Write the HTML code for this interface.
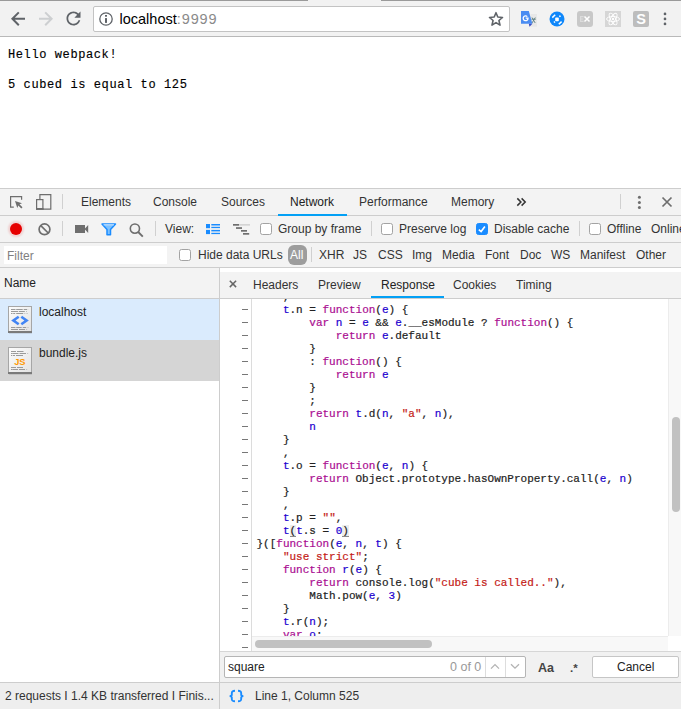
<!DOCTYPE html>
<html><head><meta charset="utf-8">
<style>
*{margin:0;padding:0;box-sizing:border-box}
html,body{width:681px;height:709px;overflow:hidden;background:#fff;font-family:"Liberation Sans",sans-serif;font-size:12px;color:#303030}
.a{position:absolute}
svg{position:absolute;overflow:visible}
.pg{position:absolute;left:8px;font-family:"Liberation Mono",monospace;font-size:12px;letter-spacing:0.6px;line-height:15px;color:#000;white-space:pre;-webkit-text-stroke:0.15px #000}
.bar{position:absolute;left:0;width:681px;background:#f3f3f3;border-bottom:1px solid #cdcdcd}
.sep{position:absolute;width:1px;background:#d0d0d0}
.cb{position:absolute;width:12px;height:12px;border:1px solid #a3a3a3;border-radius:2.5px;background:#fff}
.l{position:absolute;white-space:nowrap;color:#333;line-height:14px}
#code{position:absolute;left:220px;top:299px;width:461px;height:352px;background:#fff;overflow:hidden}
.ln{position:absolute;left:36.5px;font-family:"Liberation Mono",monospace;font-size:11px;line-height:13px;white-space:pre;color:#222;-webkit-text-stroke:0.2px currentColor}
.k{color:#aa0d91}.v{color:#1c00cf}.s{color:#c41a16}.n{color:#1c00cf}
.dash{position:absolute;left:22px;width:6px;height:1px;background:#777}
u{text-decoration:none;box-shadow:inset 0 -1px 0 #8a8a8a;background:rgba(0,0,0,.07)}
</style></head><body>
<!-- browser chrome -->
<div class="a" style="left:0;top:0;width:681px;height:37px;background:#f2f2f2;border-bottom:1px solid #b9b9b9"></div>
<div class="a" style="left:0;top:0;width:308px;height:1px;background:#9a9a9a"></div>
<div class="a" style="left:381px;top:0;width:300px;height:1px;background:#9a9a9a"></div>
<svg style="left:0;top:0" width="60" height="37" viewBox="0 0 60 37"><path d="M25 18.8H12.5M18.8 12.4L12.4 18.8L18.8 25.2" fill="none" stroke="#5f6368" stroke-width="2"/><path d="M39 18.8H51.5M45.2 12.4L51.6 18.8L45.2 25.2" fill="none" stroke="#cdcfd1" stroke-width="2"/></svg>
<svg style="left:62.9px;top:7.9px" width="21" height="21" viewBox="0 0 24 24"><path fill="#5f6368" d="M17.65 6.35C16.2 4.9 14.21 4 12 4c-4.42 0-7.99 3.58-7.99 8s3.57 8 7.99 8c3.730 0 6.84-2.55 7.73-6h-2.08c-.82 2.33-3.04 4-5.65 4-3.310 0-6-2.69-6-6s2.69-6 6-6c1.66 0 3.14.69 4.22 1.78L13 11h7V4l-2.35 2.35z"/></svg>
<div class="a" style="left:93px;top:6px;width:417px;height:26px;background:#fff;border:1px solid #c3c3c3;border-radius:2px"></div>
<svg style="left:99px;top:12px" width="14" height="14" viewBox="0 0 14 14"><circle cx="7" cy="7" r="6.2" fill="none" stroke="#5f6368" stroke-width="1.3"/><rect x="6" y="3" width="2" height="1.7" fill="#5f6368"/><rect x="6" y="6.1" width="2" height="4.8" fill="#5f6368"/></svg>
<div class="a" style="left:119.5px;top:10px;font-size:14.5px;line-height:18px;color:#000;white-space:nowrap">localhost<span style="color:#8a8a8a;letter-spacing:0.9px">:9999</span></div>
<svg style="left:0;top:0" width="681" height="37"><polygon points="496.00,12.70 497.81,17.06 502.51,17.43 498.93,20.50 500.03,25.09 496.00,22.63 491.97,25.09 493.07,20.50 489.49,17.43 494.19,17.06" fill="none" stroke="#5f6368" stroke-width="1.6" stroke-linejoin="round"/></svg>
<!-- extensions -->
<svg style="left:520px;top:11px" width="18" height="16" viewBox="0 0 18 16"><rect x="10.5" y="3" width="6.5" height="12.7" fill="#e8e8e8"/><path d="M12 6.5l3.2 5.5M15.3 6.5l-3.3 5.5M11.5 8.2h4.3" stroke="#5d7f80" stroke-width="0.9"/><path d="M1 0h7.8l3.6 12.8H1z" fill="#4a8cf2"/><path d="M8.8 12.8h3.6l-2.9 2.9z" fill="#3d4fc4"/><path d="M7.3 5.6A2.4 2.4 0 1 0 8 7.2H5.7" fill="none" stroke="#fff" stroke-width="1.3"/></svg>
<svg style="left:549px;top:11px" width="16" height="16" viewBox="0 0 16 16"><circle cx="8" cy="8" r="7.5" fill="#0f87fa"/><rect x="6.2" y="6.6" width="3.6" height="3.6" rx="0.8" fill="#fff"/><path d="M3.3 6.6L6.2 3.8M12.6 10.6L9.8 13.3" stroke="#fff" stroke-width="1.5"/><path d="M10.2 5.5l1.4-0.6M5 11.5l0.9-0.9" stroke="#fff" stroke-width="1.6"/></svg>
<svg style="left:577px;top:11px" width="16" height="16" viewBox="0 0 16 16"><rect x="0" y="0" width="16" height="16" rx="3" fill="#c8c8c8"/><path d="M6.6 5.6H3.6V10.4H6.6M3.6 8H6.2" fill="none" stroke="#dcdcdc" stroke-width="1.2"/><path d="M7.5 5.5l5 5M12.5 5.5l-5 5" stroke="#fff" stroke-width="1.5"/></svg>
<svg style="left:605px;top:11px" width="16" height="16" viewBox="0 0 16 16"><rect width="16" height="16" fill="#d6d6d6"/><g fill="none" stroke="#fff" stroke-width="0.9"><ellipse cx="8" cy="8" rx="6.5" ry="2.5"/><ellipse cx="8" cy="8" rx="6.5" ry="2.5" transform="rotate(60 8 8)"/><ellipse cx="8" cy="8" rx="6.5" ry="2.5" transform="rotate(120 8 8)"/></g><circle cx="8" cy="8" r="1.2" fill="#fff"/></svg>
<svg style="left:633px;top:11px" width="16" height="16" viewBox="0 0 16 16"><rect width="16" height="16" rx="2" fill="#bdbdbd"/><text x="8" y="13.1" font-family="Liberation Sans" font-weight="bold" font-size="14.5" fill="#fff" text-anchor="middle">S</text></svg>
<svg style="left:663px;top:12px" width="4" height="14" viewBox="0 0 4 14"><circle cx="2" cy="1.9" r="1.35" fill="#5f6368"/><circle cx="2" cy="6.9" r="1.35" fill="#5f6368"/><circle cx="2" cy="11.9" r="1.35" fill="#5f6368"/></svg>

<div class="pg" style="top:48px">Hello webpack!</div>
<div class="pg" style="top:78px">5 cubed is equal to 125</div>

<!-- devtools frame -->
<div class="a" style="left:0;top:188px;width:681px;height:1px;background:#cdcdcd"></div>
<div class="bar" style="top:189px;height:27px"></div>
<div class="bar" style="top:216px;height:27px"></div>
<div class="bar" style="top:243px;height:25px"></div>
<div class="a" style="left:0;top:268px;width:219px;height:31px;background:#f3f3f3;border-bottom:1px solid #cdcdcd"></div>
<div class="a" style="left:219px;top:268px;width:1px;height:441px;background:#cdcdcd"></div>
<div class="a" style="left:220px;top:272px;width:461px;height:27px;background:#f3f3f3;border-bottom:1px solid #cdcdcd"></div>

<!-- tab row -->
<svg style="left:10px;top:196px" width="14" height="14" viewBox="0 0 14 14"><path d="M3.8 11.1H0.6V0.6h11v3.2" fill="none" stroke="#6e6e6e" stroke-width="1.2"/><path d="M5 5l7 2.2-2.5 1 3 3-1.2 1.2-3-3-1 2.5z" fill="#6e6e6e"/></svg>
<svg style="left:36px;top:194px" width="16" height="16" viewBox="0 0 16 16"><path d="M3.9 5.2V0.6h10.9v14.6H7" fill="none" stroke="#6e6e6e" stroke-width="1.2"/><rect x="0.6" y="5.6" width="6.3" height="9.6" fill="none" stroke="#6e6e6e" stroke-width="1.2"/><rect x="0" y="14" width="7.5" height="1.8" fill="#6e6e6e"/></svg>
<div class="sep" style="left:62px;top:194px;height:15px"></div>
<div class="l" style="left:81px;top:195px">Elements</div>
<div class="l" style="left:153px;top:195px">Console</div>
<div class="l" style="left:221px;top:195px">Sources</div>
<div class="l" style="left:290px;top:195px;color:#222">Network</div>
<div class="a" style="left:278px;top:214px;width:69px;height:2px;background:#03a0f5"></div>
<div class="l" style="left:359px;top:195px">Performance</div>
<div class="l" style="left:451px;top:195px">Memory</div>
<svg style="left:516px;top:197px" width="11" height="10" viewBox="0 0 11 10"><path d="M1.3 1.4l3.6 3.6-3.6 3.6M5.6 1.4l3.6 3.6-3.6 3.6" fill="none" stroke="#333" stroke-width="1.5"/></svg>
<div class="sep" style="left:620px;top:194px;height:15px"></div>
<svg style="left:637px;top:195px" width="5" height="15" viewBox="0 0 5 15"><circle cx="2.4" cy="2.3" r="1.5" fill="#6e6e6e"/><circle cx="2.4" cy="7.4" r="1.5" fill="#6e6e6e"/><circle cx="2.4" cy="12.6" r="1.5" fill="#6e6e6e"/></svg>
<svg style="left:662px;top:197px" width="10" height="10" viewBox="0 0 10 10"><path d="M0.5 0.5l9 9M9.5 0.5l-9 9" stroke="#6e6e6e" stroke-width="1.7"/></svg>

<!-- toolbar 2 -->
<div class="a" style="left:9px;top:222px;width:14px;height:14px;border-radius:50%;background:rgba(230,0,0,.12);box-shadow:0 0 2px 1px rgba(230,0,0,.14)"></div>
<div class="a" style="left:10px;top:223px;width:12px;height:12px;border-radius:50%;background:#e60000"></div>
<svg style="left:38px;top:223px" width="13" height="13" viewBox="0 0 13 13"><circle cx="6.5" cy="6.3" r="5.4" fill="none" stroke="#6e6e6e" stroke-width="1.7"/><path d="M2.8 2.6l7.4 7.4" stroke="#6e6e6e" stroke-width="1.7"/></svg>
<div class="sep" style="left:62px;top:221px;height:15px"></div>
<svg style="left:75px;top:225px" width="14" height="8" viewBox="0 0 14 8"><rect x="0" y="0" width="10" height="8" fill="#6e6e6e"/><path d="M9.5 4l3.7-4v8z" fill="#6e6e6e"/></svg>
<svg style="left:101px;top:223px" width="16" height="13" viewBox="0 0 16 13"><path d="M1 1h13.5l-5 5.5v5.3h-3.5v-5.3z" fill="#7cc1ff" stroke="#1a8cff" stroke-width="1.5" stroke-linejoin="round"/><path d="M2.5 1.8h10.5" stroke="#d8ecff" stroke-width="1"/></svg>
<svg style="left:129px;top:223px" width="16" height="14" viewBox="0 0 16 14"><circle cx="5.9" cy="5.6" r="4.6" fill="none" stroke="#6e6e6e" stroke-width="1.6"/><path d="M9.2 9l4.6 4.6" stroke="#6e6e6e" stroke-width="1.9"/></svg>
<div class="sep" style="left:155px;top:221px;height:15px"></div>
<div class="l" style="left:165px;top:222px">View:</div>
<svg style="left:206px;top:224px" width="14" height="11" viewBox="0 0 14 11"><rect x="0" y="0" width="4" height="4.2" fill="#1a8cff"/><rect x="0" y="5.9" width="4" height="4.2" fill="#1a8cff"/><rect x="5.3" y="0" width="8.7" height="1.5" fill="#1a8cff"/><rect x="5.3" y="2.8" width="8.7" height="1.3" fill="#1a8cff"/><rect x="5.3" y="5.9" width="8.7" height="1.5" fill="#1a8cff"/><rect x="5.3" y="8.8" width="8.7" height="1.3" fill="#1a8cff"/></svg>
<svg style="left:233px;top:224px" width="18" height="11" viewBox="0 0 18 11"><rect x="0" y="0" width="6" height="1.7" fill="#6e6e6e"/><rect x="6" y="0" width="11" height="1.7" fill="#d4d4d4"/><rect x="3" y="3.2" width="6" height="1.7" fill="#6e6e6e"/><rect x="8" y="6" width="6" height="1.7" fill="#6e6e6e"/><rect x="10" y="9" width="6.2" height="1.7" fill="#6e6e6e"/></svg>
<div class="cb" style="left:260px;top:223px"></div>
<div class="l" style="left:278px;top:222px">Group by frame</div>
<div class="sep" style="left:371px;top:221px;height:15px"></div>
<div class="cb" style="left:381px;top:223px"></div>
<div class="l" style="left:399px;top:222px">Preserve log</div>
<div class="cb" style="left:476px;top:223px;background:#1a8cff;border-color:#1a8cff"></div>
<svg style="left:476px;top:223px" width="12" height="12" viewBox="0 0 12 12"><path d="M2.8 6.6l2.3 1.9 3.8-5" fill="none" stroke="#fff" stroke-width="1.6"/></svg>
<div class="l" style="left:494px;top:222px">Disable cache</div>
<div class="sep" style="left:579px;top:221px;height:15px"></div>
<div class="cb" style="left:589px;top:223px"></div>
<div class="l" style="left:607px;top:222px">Offline</div>
<div class="l" style="left:651px;top:222px">Online</div>

<!-- filter row -->
<div class="a" style="left:4px;top:246px;width:163px;height:18px;background:#fff"></div>
<div class="l" style="left:7px;top:249px;color:#7f7f7f">Filter</div>
<div class="cb" style="left:179px;top:249px"></div>
<div class="l" style="left:198px;top:248px">Hide data URLs</div>
<div class="a" style="left:288px;top:245px;width:19px;height:20px;border-radius:6px;background:#9d9d9d"></div>
<div class="l" style="left:290px;top:248px;color:#fff">All</div>
<div class="sep" style="left:311px;top:247px;height:15px"></div>
<div class="l" style="left:319px;top:248px">XHR</div>
<div class="l" style="left:353px;top:248px">JS</div>
<div class="l" style="left:378px;top:248px">CSS</div>
<div class="l" style="left:412px;top:248px">Img</div>
<div class="l" style="left:442px;top:248px">Media</div>
<div class="l" style="left:485px;top:248px">Font</div>
<div class="l" style="left:520px;top:248px">Doc</div>
<div class="l" style="left:551px;top:248px">WS</div>
<div class="l" style="left:580px;top:248px">Manifest</div>
<div class="l" style="left:636px;top:248px">Other</div>

<!-- name list -->
<div class="l" style="left:4px;top:276px;color:#222">Name</div>
<div class="a" style="left:0;top:299px;width:219px;height:41px;background:#daebfd"></div>
<div class="a" style="left:0;top:340px;width:219px;height:41px;background:#d5d5d5"></div>
<div class="l" style="left:39px;top:305px;color:#222">localhost</div>
<div class="l" style="left:39px;top:346px;color:#222">bundle.js</div>
<svg style="left:8px;top:306px" width="24" height="28" viewBox="0 0 24 28"><defs><linearGradient id="gd" x1="0" y1="0" x2="1" y2="1"><stop offset="0" stop-color="#fdfdfd"/><stop offset="1" stop-color="#e2e2e2"/></linearGradient></defs><rect x="0.5" y="0.5" width="23" height="25" fill="url(#gd)" stroke="#a6a6a6"/><rect x="0" y="25" width="24" height="2" fill="#7a7a7a"/><rect x="1" y="27" width="23" height="0.8" fill="#000" opacity=".12"/><path d="M3 3.5h17.8" stroke="#9a9a9a" stroke-width="1" stroke-dasharray="4.5 0.7 6.5 1 3.5 1.5 0.6"/><path d="M3 5.5h17.8" stroke="#9a9a9a" stroke-width="1" stroke-dasharray="7 0.8 6 1.5 0.6 5"/><path d="M3 7.5h17.8" stroke="#9a9a9a" stroke-width="1" stroke-dasharray="1.5 0.7 2 1 7 1.4 0.6"/><path d="M3 21.5h17.8" stroke="#9a9a9a" stroke-width="1" stroke-dasharray="4.5 0.7 5.5 1 3.5 1.5 0.6"/><path d="M3 23.5h17.8" stroke="#9a9a9a" stroke-width="1" stroke-dasharray="7 1 6 1.5 0.6 5"/><path d="M10.7 10.7L5.4 14.5L10.7 18.3M13.3 10.7L18.6 14.5L13.3 18.3" fill="none" stroke="#4285f4" stroke-width="2.6"/></svg>
<svg style="left:8px;top:347px" width="24" height="28" viewBox="0 0 24 28"><rect x="0.5" y="0.5" width="23" height="25" fill="url(#gd)" stroke="#a6a6a6"/><rect x="0" y="25" width="24" height="2" fill="#7a7a7a"/><rect x="1" y="27" width="23" height="0.8" fill="#000" opacity=".12"/><path d="M3 4.5h17.8" stroke="#9a9a9a" stroke-width="1" stroke-dasharray="5 1 6.5 10"/><path d="M3 6.5h17.8" stroke="#9a9a9a" stroke-width="1" stroke-dasharray="1.5 0 6 1 6.5 1.5 0.6"/><path d="M3 8.5h17.8" stroke="#9a9a9a" stroke-width="1" stroke-dasharray="1.3 0.7 2 1 7 10"/><path d="M3 20.5h17.8" stroke="#9a9a9a" stroke-width="1" stroke-dasharray="5 1 6 10"/><path d="M3 22.5h17.8" stroke="#9a9a9a" stroke-width="1" stroke-dasharray="1.5 0 5.5 1 6 1.5 0.6"/><text x="11.9" y="18.3" font-family="Liberation Sans" font-weight="bold" font-size="9.3" fill="#ff9800" text-anchor="middle">JS</text></svg>

<!-- response tabs -->
<svg style="left:229px;top:280px" width="8" height="8" viewBox="0 0 8 8"><path d="M0.8 0.8l6.3 6.3M7.1 0.8l-6.3 6.3" stroke="#666" stroke-width="1.5"/></svg>
<div class="l" style="left:253px;top:278px">Headers</div>
<div class="l" style="left:318px;top:278px">Preview</div>
<div class="l" style="left:381px;top:278px;color:#222">Response</div>
<div class="a" style="left:371px;top:296px;width:73px;height:2px;background:#03a0f5"></div>
<div class="l" style="left:453px;top:278px">Cookies</div>
<div class="l" style="left:516px;top:278px">Timing</div>

<!-- code -->
<div id="code">
<div class="a" style="left:31px;top:0;width:1px;height:352px;background:#dcdcdc"></div>
<div class="ln" style="top:-8px">    ,</div>
<div class="dash" style="top:-3px"></div>
<div class="ln" style="top:5px">    <span class="v">t</span>.n = <span class="k">function</span>(<span class="v">e</span>) {</div>
<div class="dash" style="top:10px"></div>
<div class="ln" style="top:18px">        <span class="k">var</span> <span class="v">n</span> = <span class="v">e</span> &amp;&amp; <span class="v">e</span>.__esModule ? <span class="k">function</span>() {</div>
<div class="dash" style="top:23px"></div>
<div class="ln" style="top:31px">            <span class="k">return</span> <span class="v">e</span>.default</div>
<div class="dash" style="top:36px"></div>
<div class="ln" style="top:44px">        }</div>
<div class="dash" style="top:49px"></div>
<div class="ln" style="top:57px">        : <span class="k">function</span>() {</div>
<div class="dash" style="top:62px"></div>
<div class="ln" style="top:70px">            <span class="k">return</span> <span class="v">e</span></div>
<div class="dash" style="top:75px"></div>
<div class="ln" style="top:83px">        }</div>
<div class="dash" style="top:88px"></div>
<div class="ln" style="top:96px">        ;</div>
<div class="dash" style="top:101px"></div>
<div class="ln" style="top:109px">        <span class="k">return</span> <span class="v">t</span>.d(<span class="v">n</span>, <span class="s">&quot;a&quot;</span>, <span class="v">n</span>),</div>
<div class="dash" style="top:114px"></div>
<div class="ln" style="top:122px">        <span class="v">n</span></div>
<div class="dash" style="top:127px"></div>
<div class="ln" style="top:135px">    }</div>
<div class="dash" style="top:140px"></div>
<div class="ln" style="top:148px">    ,</div>
<div class="dash" style="top:153px"></div>
<div class="ln" style="top:161px">    <span class="v">t</span>.o = <span class="k">function</span>(<span class="v">e</span>, <span class="v">n</span>) {</div>
<div class="dash" style="top:166px"></div>
<div class="ln" style="top:174px">        <span class="k">return</span> Object.prototype.hasOwnProperty.call(<span class="v">e</span>, <span class="v">n</span>)</div>
<div class="dash" style="top:179px"></div>
<div class="ln" style="top:187px">    }</div>
<div class="dash" style="top:192px"></div>
<div class="ln" style="top:200px">    ,</div>
<div class="dash" style="top:205px"></div>
<div class="ln" style="top:213px">    <span class="v">t</span>.p = <span class="s">&quot;&quot;</span>,</div>
<div class="dash" style="top:218px"></div>
<div class="ln" style="top:226px">    <span class="v">t</span><u>(</u><span class="v">t</span>.s = <span class="n">0</span><u>)</u></div>
<div class="dash" style="top:231px"></div>
<div class="ln" style="top:239px">}([<span class="k">function</span>(<span class="v">e</span>, <span class="v">n</span>, <span class="v">t</span>) {</div>
<div class="dash" style="top:244px"></div>
<div class="ln" style="top:252px">    <span class="s">&quot;use strict&quot;</span>;</div>
<div class="dash" style="top:257px"></div>
<div class="ln" style="top:265px">    <span class="k">function</span> <span class="v">r</span>(<span class="v">e</span>) {</div>
<div class="dash" style="top:270px"></div>
<div class="ln" style="top:278px">        <span class="k">return</span> console.log(<span class="s">&quot;cube is called..&quot;</span>),</div>
<div class="dash" style="top:283px"></div>
<div class="ln" style="top:291px">        Math.pow(<span class="v">e</span>, <span class="n">3</span>)</div>
<div class="dash" style="top:296px"></div>
<div class="ln" style="top:304px">    }</div>
<div class="dash" style="top:309px"></div>
<div class="ln" style="top:317px">    <span class="v">t</span>.r(<span class="v">n</span>);</div>
<div class="dash" style="top:322px"></div>
<div class="ln" style="top:330px">    <span class="k">var</span> <span class="v">o</span>;</div>
<div class="dash" style="top:335px"></div>
<div class="ln" style="top:343px">    <span class="v">t</span>.d(<span class="v">n</span>, <span class="s">&quot;square&quot;</span>, <span class="k">function</span>() {</div>
<div class="dash" style="top:348px"></div>

<div class="a" style="left:32px;top:337px;width:416px;height:15px;background:#f8f8f8;border-top:1px solid #ececec"></div>
<div class="a" style="left:35px;top:341px;width:177px;height:8px;border-radius:4px;background:#c1c1c1"></div>
<div class="a" style="left:448px;top:0;width:13px;height:337px;background:#f8f8f8;border-left:1px solid #ececec"></div>
<div class="a" style="left:452px;top:118px;width:8px;height:95px;border-radius:4px;background:#c1c1c1"></div>
</div>

<!-- search bar -->
<div class="a" style="left:220px;top:651px;width:461px;height:31px;background:#f1f1f1;border-top:1px solid #d6d6d6"></div>
<div class="a" style="left:224px;top:656px;width:302px;height:22px;background:#fff;border:1px solid #b5b5b5;border-radius:2px"></div>
<div class="l" style="left:228px;top:660px;color:#222">square</div>
<div class="l" style="left:450px;top:660px;color:#999;font-size:12.5px">0 of 0</div>
<div class="a" style="left:485px;top:657px;width:1px;height:20px;background:#ddd"></div>
<div class="a" style="left:505px;top:657px;width:1px;height:20px;background:#ddd"></div>
<svg style="left:490px;top:663px" width="10" height="7" viewBox="0 0 10 7"><path d="M1 5.6l4-4 4 4" fill="none" stroke="#b3b3b3" stroke-width="1.3"/></svg>
<svg style="left:510px;top:663px" width="10" height="7" viewBox="0 0 10 7"><path d="M1 1.2l4 4 4-4" fill="none" stroke="#b3b3b3" stroke-width="1.3"/></svg>
<div class="l" style="left:538px;top:661px;font-weight:bold;color:#444;font-size:12.5px">Aa</div>
<div class="l" style="left:570px;top:660.5px;font-weight:bold;color:#444;font-size:11.5px">.*</div>
<div class="a" style="left:592px;top:656px;width:87px;height:22px;background:#fff;border:1px solid #c6c6c6;border-radius:2px"></div>
<div class="l" style="left:617px;top:660px;color:#222">Cancel</div>

<!-- status -->
<div class="a" style="left:0;top:682px;width:681px;height:27px;background:#eeeeee;border-top:1px solid #cdcdcd"></div>
<div class="a" style="left:219px;top:682px;width:1px;height:27px;background:#cdcdcd"></div>
<div class="l" style="left:5px;top:689px">2 requests I 1.4 KB transferred I Finis...</div>
<svg style="left:0;top:0" width="681" height="709"><path d="M235 690.8C232 690.8 231.8 691.8 231.8 693.6V694.8C231.8 695.8 231.2 696.1 229.6 696.1C231.2 696.1 231.8 696.6 231.8 697.6V698.8C231.8 700.6 232 701.2 235 701.2M238 690.8C241 690.8 241.2 691.8 241.2 693.6V694.8C241.2 695.8 241.8 696.1 243.4 696.1C241.8 696.1 241.2 696.6 241.2 697.6V698.8C241.2 700.6 241 701.2 238 701.2" fill="none" stroke="#1a8cff" stroke-width="1.9"/></svg>
<div class="l" style="left:255px;top:689px">Line 1, Column 525</div>
</body></html>
